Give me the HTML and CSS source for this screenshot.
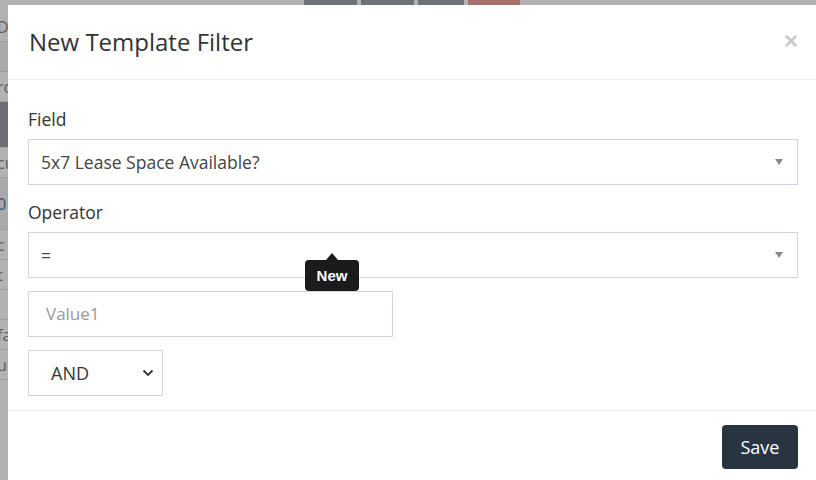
FILE: index.html
```html
<!DOCTYPE html>
<html lang="en">
<head>
    <meta charset="UTF-8">
    <meta name="viewport" content="width=device-width, initial-scale=1.0">
    <title>New Template Filter</title>
    <link rel="stylesheet" href="styles.css">
</head>
<body>
    <div class="page">
        <div class="toolbar">
            <span class="tool-btn"></span>
            <span class="tool-btn"></span>
            <span class="tool-btn small"></span>
            <span class="tool-btn danger"></span>
        </div>
        <div class="page-list">
            <div class="page-row">D</div>
            <div class="page-row shade"></div>
            <div class="page-row">ro</div>
            <div class="page-row dark"></div>
            <div class="page-row">cu</div>
            <div class="page-row shade blue">0</div>
            <div class="page-row">c</div>
            <div class="page-row">t</div>
            <div class="page-row"></div>
            <div class="page-row">fa</div>
            <div class="page-row">ul</div>
        </div>
    </div>

    <div class="backdrop"></div>

    <div class="modal">
        <div class="modal-header">
            <h4 class="modal-title">New Template Filter</h4>
            <span class="close">&times;</span>
        </div>

        <div class="modal-body">
            <div class="form-group">
                <label>Field</label>
                <div class="select-box">
                    <span>5x7 Lease Space Available?</span>
                    <span class="caret"></span>
                </div>
            </div>

            <div class="form-group">
                <label>Operator</label>
                <div class="select-box has-tip">
                    <span>=</span>
                    <span class="caret"></span>
                    <div class="tooltip">New</div>
                </div>
            </div>

            <div class="input-box">Value1</div>

            <div class="native-select">
                <span>AND</span>
                <svg width="12" height="8" viewBox="0 0 12 8">
                    <path d="M1.5 1.5 L6 6 L10.5 1.5" fill="none" stroke="#333" stroke-width="1.8"/>
                </svg>
            </div>
        </div>

        <div class="modal-footer">
            <button class="save-btn">Save</button>
        </div>
    </div>
</body>
</html>
```

FILE: styles.css
```css
* {
    margin: 0;
    padding: 0;
    box-sizing: border-box;
}

body {
    background: #fff;
    font-family: "Open Sans", Arial, sans-serif;
    overflow: hidden;
}

/* page behind the dialog */
.page {
    height: 480px;
}

.toolbar {
    display: flex;
    gap: 4px;
    height: 12px;
    padding-left: 304px;
}

.tool-btn {
    width: 53px;
    height: 12px;
    background: #9ea3a9;
    border-radius: 0 0 3px 3px;
}

.tool-btn.small {
    width: 46px;
}

.tool-btn.danger {
    width: 52px;
    background: #f0a49a;
}

.page-list {
    width: 200px;
}

.page-row {
    height: 30px;
    line-height: 30px;
    border-bottom: 1px solid #e2e2e2;
    color: #888;
    font-size: 16px;
    text-indent: -3px;
}

.page-row.shade {
    background: #f2f2f2;
}

.page-row.dark {
    background: #9ba0a6;
    height: 46px;
}

.page-row.blue {
    color: #4a7fc0;
    height: 52px;
    line-height: 52px;
}

.backdrop {
    position: fixed;
    inset: 0;
    background: rgba(0, 0, 0, 0.3);
}

/* dialog */
.modal {
    position: fixed;
    left: 8px;
    top: 5px;
    width: 810px;
    height: 520px;
    background: #fff;
}

.modal-header {
    position: relative;
    padding: 20px 21px;
    border-bottom: 1px solid #eceeef;
}

.modal-title {
    font-size: 24px;
    line-height: 34px;
    font-weight: normal;
    color: #333;
}

.close {
    position: absolute;
    right: 20px;
    top: 22px;
    font-family: Arial, sans-serif;
    font-size: 24px;
    font-weight: bold;
    color: #c9c9c9;
}

.modal-body {
    padding: 28px 20px 14px;
}

.form-group {
    margin-bottom: 16px;
}

.form-group:nth-child(2) {
    margin-bottom: 13px;
}

.form-group label {
    display: block;
    font-size: 17.5px;
    line-height: 22px;
    color: #333;
    margin-bottom: 9px;
}

.select-box {
    position: relative;
    display: flex;
    align-items: center;
    justify-content: space-between;
    height: 46px;
    border: 1px solid #d3d5de;
    padding: 0 14px 0 12px;
    font-size: 17.5px;
    color: #444;
}

.caret {
    width: 0;
    height: 0;
    border-left: 4.5px solid transparent;
    border-right: 4.5px solid transparent;
    border-top: 6px solid #888;
}

.tooltip {
    position: absolute;
    left: 276px;
    top: 27px;
    width: 54px;
    height: 31px;
    background: #1b1b1b;
    border-radius: 4px;
    color: #fff;
    font-family: "Liberation Sans", Arial, sans-serif;
    font-size: 15px;
    font-weight: bold;
    line-height: 31px;
    text-align: center;
}

.tooltip::before {
    content: "";
    position: absolute;
    left: 21px;
    top: -7px;
    border-left: 6px solid transparent;
    border-right: 6px solid transparent;
    border-bottom: 7px solid #1b1b1b;
}

.input-box {
    width: 365px;
    height: 46px;
    border: 1px solid #d3d5de;
    padding: 0 17px;
    line-height: 44px;
    font-size: 17px;
    color: #999;
    margin-bottom: 13px;
}

.native-select {
    display: flex;
    align-items: center;
    justify-content: space-between;
    width: 135px;
    height: 46px;
    border: 1px solid #d3d5de;
    padding: 0 8px 0 22px;
    font-size: 18px;
    color: #333;
}

.modal-footer {
    display: flex;
    justify-content: flex-end;
    padding: 14px 20px;
    border-top: 1px solid #eceeef;
}

.save-btn {
    width: 76px;
    height: 44px;
    background: #283541;
    color: #fff;
    border: none;
    border-radius: 4px;
    font-family: "Open Sans", Arial, sans-serif;
    font-size: 18px;
}
```
